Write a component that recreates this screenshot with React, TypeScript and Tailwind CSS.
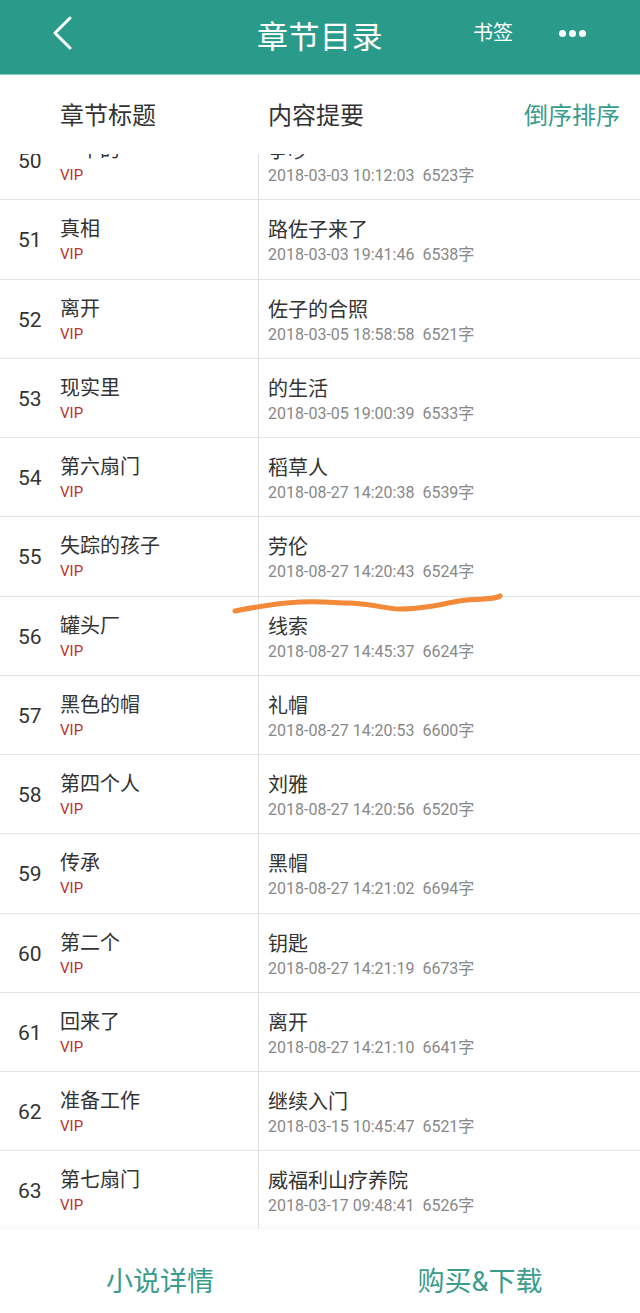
import React from "react";

type Row = { n: number; title: string; sub: string; date: string; words: string };

const rows: Row[] = [
  { n: 50, title: "一半的", sub: "争吵", date: "2018-03-03 10:12:03", words: "6523字" },
  { n: 51, title: "真相", sub: "路佐子来了", date: "2018-03-03 19:41:46", words: "6538字" },
  { n: 52, title: "离开", sub: "佐子的合照", date: "2018-03-05 18:58:58", words: "6521字" },
  { n: 53, title: "现实里", sub: "的生活", date: "2018-03-05 19:00:39", words: "6533字" },
  { n: 54, title: "第六扇门", sub: "稻草人", date: "2018-08-27 14:20:38", words: "6539字" },
  { n: 55, title: "失踪的孩子", sub: "劳伦", date: "2018-08-27 14:20:43", words: "6524字" },
  { n: 56, title: "罐头厂", sub: "线索", date: "2018-08-27 14:45:37", words: "6624字" },
  { n: 57, title: "黑色的帽", sub: "礼帽", date: "2018-08-27 14:20:53", words: "6600字" },
  { n: 58, title: "第四个人", sub: "刘雅", date: "2018-08-27 14:20:56", words: "6520字" },
  { n: 59, title: "传承", sub: "黑帽", date: "2018-08-27 14:21:02", words: "6694字" },
  { n: 60, title: "第二个", sub: "钥匙", date: "2018-08-27 14:21:19", words: "6673字" },
  { n: 61, title: "回来了", sub: "离开", date: "2018-08-27 14:21:10", words: "6641字" },
  { n: 62, title: "准备工作", sub: "继续入门", date: "2018-03-15 10:45:47", words: "6521字" },
  { n: 63, title: "第七扇门", sub: "威福利山疗养院", date: "2018-03-17 09:48:41", words: "6526字" },
];

const font = { fontFamily: 'Roboto, "Noto Sans CJK SC", sans-serif' };

export default function App() {
  return (
    <div
      className="relative w-[640px] h-[1313px] bg-white overflow-hidden flex flex-col"
      style={font}
    >
      {/* Header */}
      <div className="h-[74px] bg-[#2a9b8b] flex items-center relative shrink-0">
        <svg className="absolute left-[50px] top-[16px]" width="24" height="34" viewBox="0 0 24 34">
          <polyline points="20,2 5,17 20,32" fill="none" stroke="white" strokeWidth="3" strokeLinecap="round" strokeLinejoin="round" />
        </svg>
        <div className="w-full text-center text-white text-[31px] leading-none tracking-[0.5px]">章节目录</div>
        <div className="absolute left-[473px] top-[21px] text-white text-[20px] leading-[24px]">书签</div>
        <div className="absolute left-[559px] top-[30px] flex gap-[3px]">
          <span className="w-[7px] h-[7px] rounded-full bg-white" />
          <span className="w-[7px] h-[7px] rounded-full bg-white" />
          <span className="w-[7px] h-[7px] rounded-full bg-white" />
        </div>
      </div>
      <div className="h-[1px] bg-[#8fcdc3] shrink-0" />

      {/* Column header */}
      <div className="h-[79px] flex items-center shrink-0 text-[24px] text-[#333] pt-[2px]">
        <div className="w-[268px] pl-[60px]">章节标题</div>
        <div className="w-[256px]">内容提要</div>
        <div className="text-[#3a9c8c]">倒序排序</div>
      </div>

      {/* List */}
      <div className="h-[1075px] overflow-hidden shrink-0">
        <div className="mt-[-33px]">
          {rows.map((r) => (
            <div key={r.n} className="h-[79.25px] flex border-b border-[#e4e4e4]">
              <div className="w-[259px] border-r border-[#dedede] flex relative">
                <div className="absolute left-[18px] top-[28px] text-[21px] leading-[24px] text-[#333]">{r.n}</div>
                <div className="absolute left-[60px] top-[17px] text-[20px] leading-[24px] text-[#333]">{r.title}</div>
                <div className="absolute left-[60px] top-[45px] text-[15px] leading-[18px] text-[#c0302a]">VIP</div>
              </div>
              <div className="flex-1 relative">
                <div className="absolute left-[9px] top-[18px] text-[20px] leading-[24px] text-[#333]">{r.sub}</div>
                <div className="absolute left-[9px] top-[45px] text-[16px] leading-[20px] text-[#888] whitespace-pre">
                  {r.date}  {r.words}
                </div>
              </div>
            </div>
          ))}
        </div>
      </div>

      {/* Bottom bar */}
      <div className="flex-1 bg-white shadow-[0_-3px_5px_rgba(0,0,0,0.03)] flex items-start pt-[37px] text-[27px] leading-[32px] text-[#3a9c8c]">
        <div className="w-1/2 text-center">小说详情</div>
        <div className="w-1/2 text-center">购买&amp;下载</div>
      </div>

      {/* Orange annotation stroke */}
      <svg className="absolute left-0 top-0 pointer-events-none" width="640" height="1313">
        <path
          d="M235 611 C 260 606, 280 603, 300 602 C 325 601, 335 603, 350 603 C 375 604, 385 609, 400 609 C 415 609, 425 607, 433 606 C 450 603, 455 601, 467 600 C 485 599, 495 599, 500 596"
          fill="none"
          stroke="#f28a3a"
          strokeWidth="5"
          strokeLinecap="round"
        />
      </svg>
    </div>
  );
}
